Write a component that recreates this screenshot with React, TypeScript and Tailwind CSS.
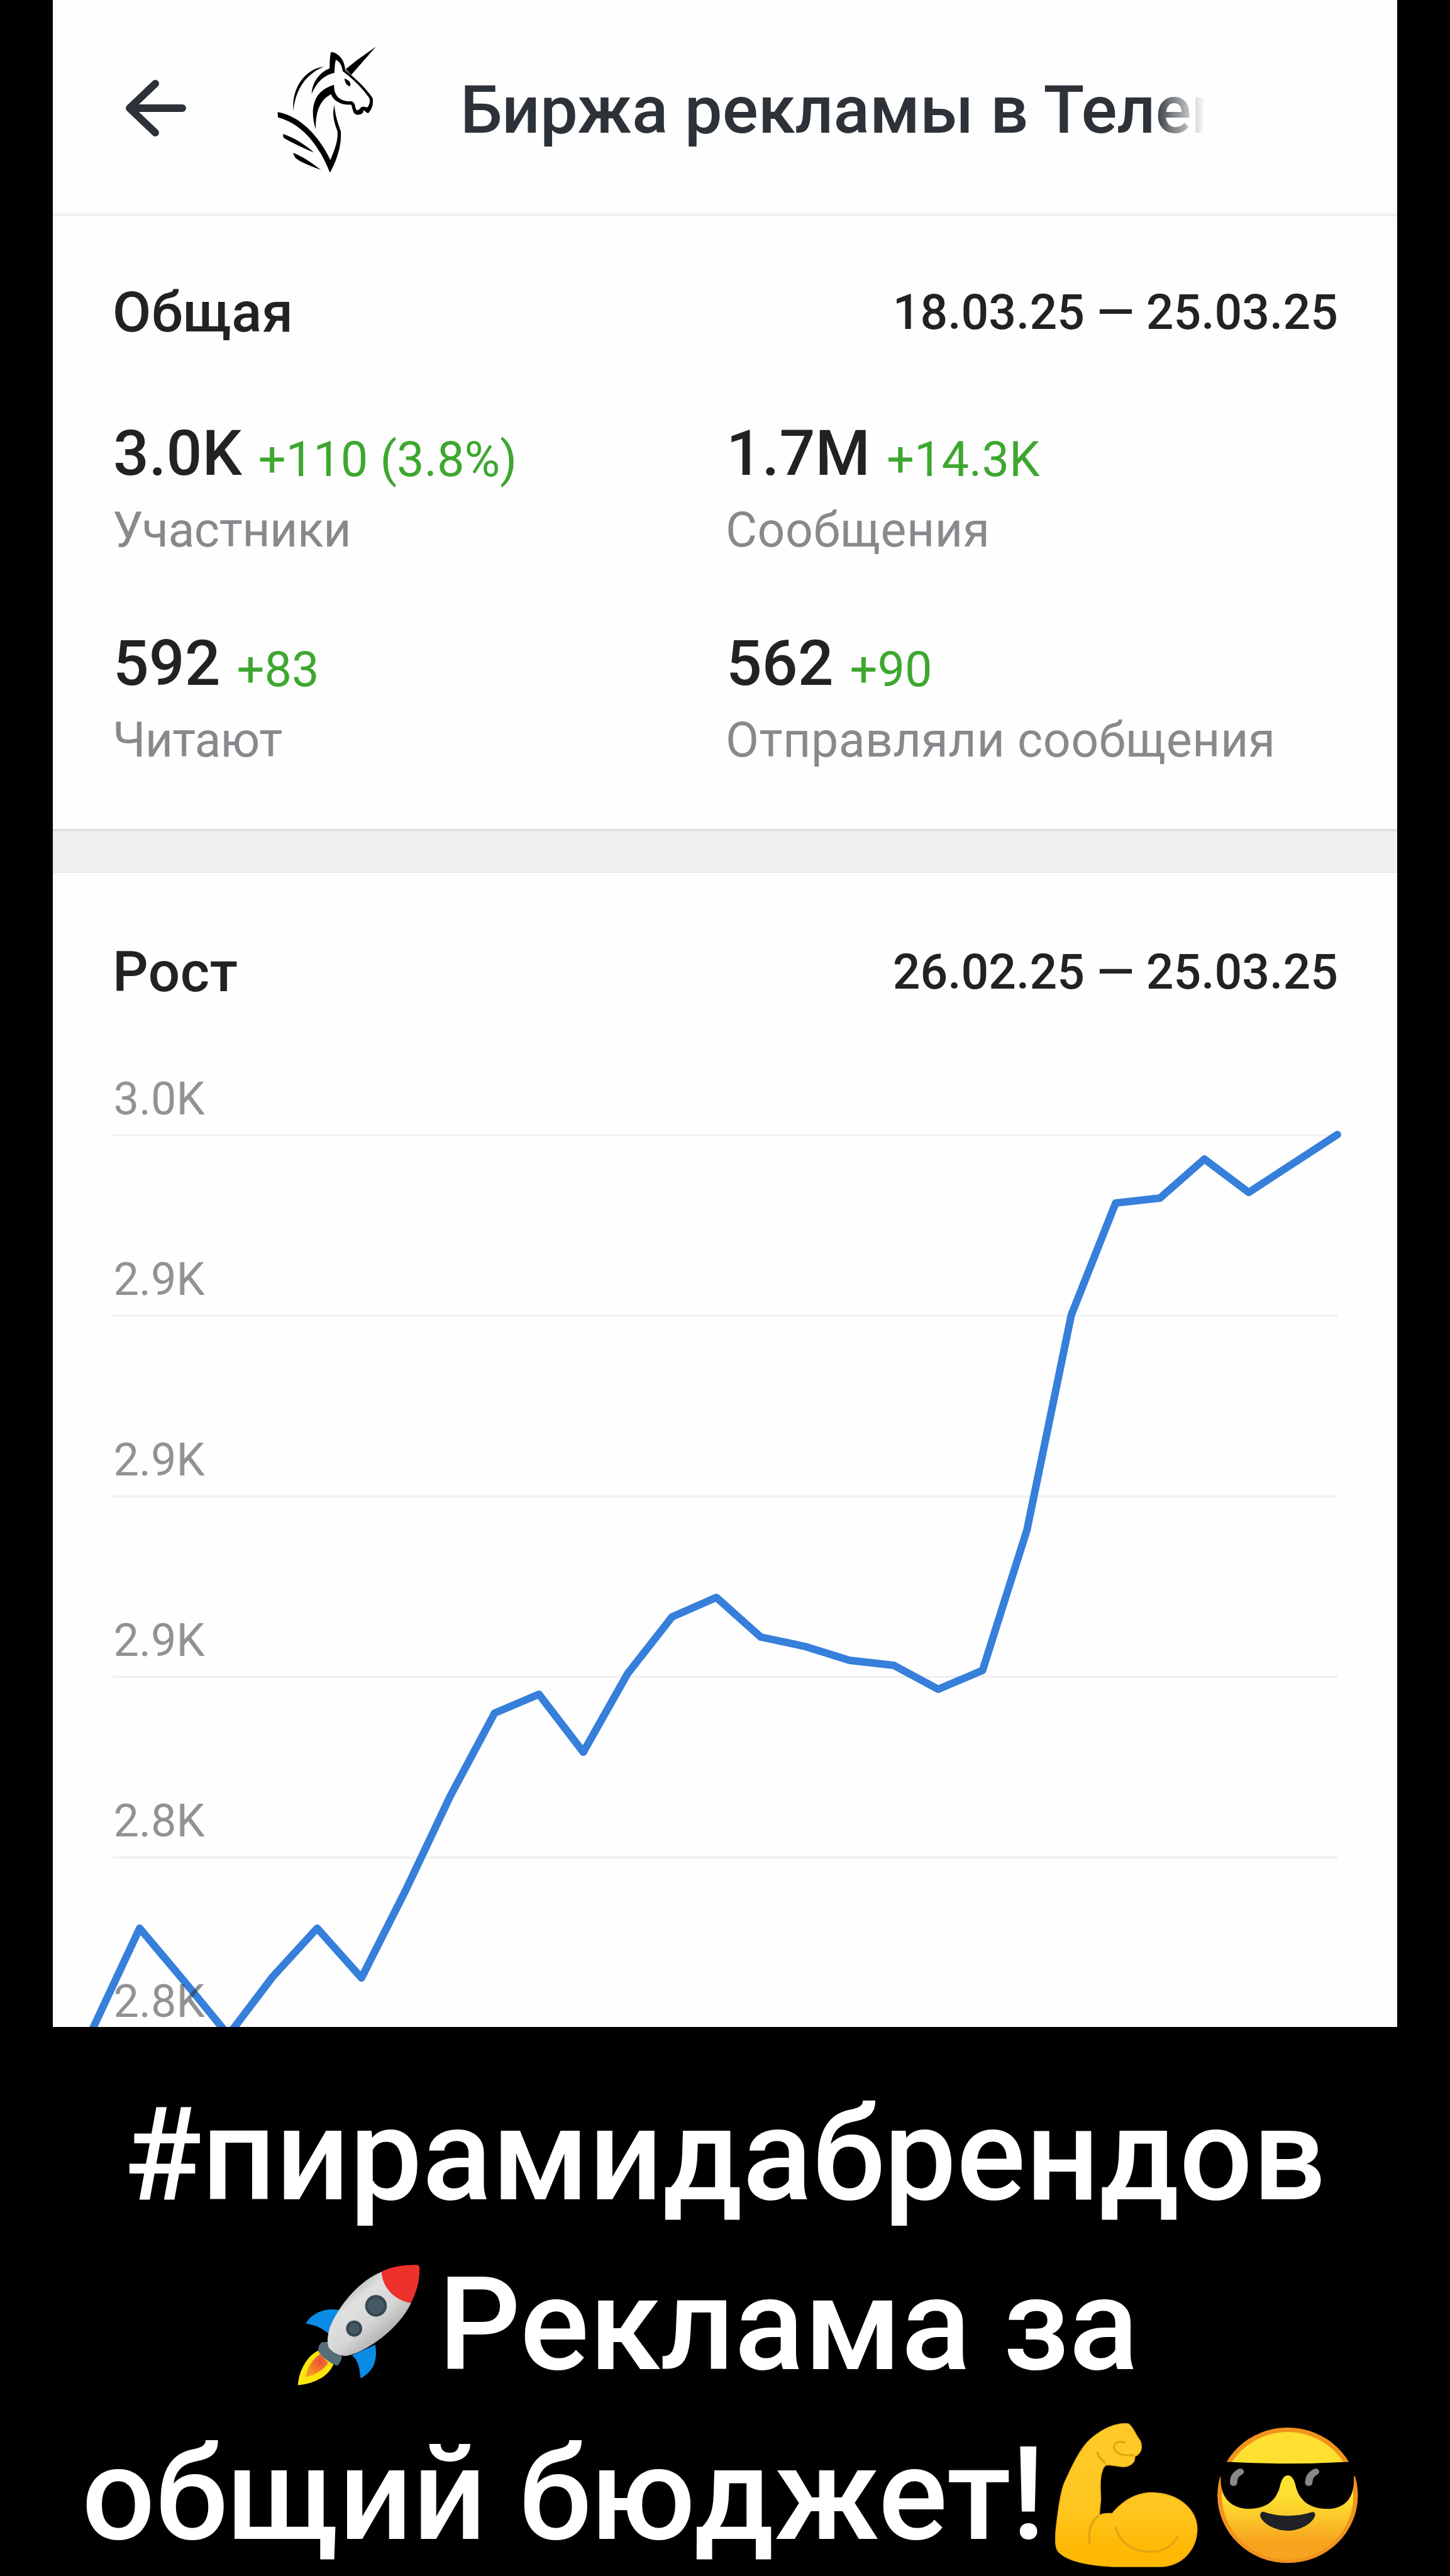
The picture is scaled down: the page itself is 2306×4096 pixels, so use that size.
import clsx from 'clsx';

type Stat = {
  value: string;
  delta: string;
  label: string;
  tracking: string;
};

const stats: Stat[] = [
  {
    value: '3.0K',
    delta: '+110 (3.8%)',
    label: 'Участники',
    tracking: 'tracking-[-0.5px]',
  },
  {
    value: '1.7M',
    delta: '+14.3K',
    label: 'Сообщения',
    tracking: 'tracking-[0.5px]',
  },
  {
    value: '592',
    delta: '+83',
    label: 'Читают',
    tracking: 'tracking-[-1px]',
  },
  {
    value: '562',
    delta: '+90',
    label: 'Отправляли сообщения',
    tracking: 'tracking-[0.5px]',
  },
];

const gridLabels = ['3.0K', '2.9K', '2.9K', '2.9K', '2.8K', '2.8K'];

// y of every day, the last one sits on the right edge of the grid
const growth = [
  1770, 1621, 1470, 1554, 1640, 1547, 1470, 1549, 1409, 1260, 1128, 1098, 1190,
  1065, 975, 944, 1007, 1022, 1044, 1052, 1090, 1060, 837, 495, 317, 309, 247,
  300, 254, 208,
];

const DAY = 70.55;
const GRID_STEP = 287.1;

const BackArrow = (): JSX.Element => (
  <svg className="w-[96px] h-[90px] shrink-0" viewBox="0 0 96 90">
    <path
      d="M90 45H8M47 6L6 45l41 39"
      fill="none"
      stroke="#2c3237"
      strokeWidth="12"
      strokeLinecap="round"
      strokeLinejoin="round"
    />
  </svg>
);

const Unicorn = (): JSX.Element => (
  <svg
    className="w-[214px] h-[232px] shrink-0 -mt-1"
    viewBox="0 0 720 780"
    fill="#000"
  >
    <path d="M632 68L500 218L470 188L530 140Z" />
    <path d="M392 96C430 102 464 135 468 192C520 235 580 290 614 342C620 370 612 405 590 424C578 420 570 408 566 408C566 425 550 434 530 432C506 426 508 395 500 378C450 382 405 360 392 322C340 350 308 400 310 510C290 450 284 370 330 318C355 290 385 278 408 272C406 330 440 364 500 360C526 366 516 394 530 408C545 408 545 392 562 388C580 388 584 400 592 384C600 370 602 355 596 342C560 290 510 240 455 200C448 165 440 150 418 138C410 165 412 185 410 208C350 220 315 260 288 320C290 260 330 205 384 184C386 150 384 120 392 96Z" />
    <path d="M354 174C250 190 180 290 190 412C200 310 245 220 354 174Z" />
    <path d="M464 238C490 248 500 262 494 280C476 276 466 262 464 238Z" />
    <path d="M106 418C240 440 340 570 388 674C420 600 430 560 426 520C408 470 396 430 410 380C412 430 430 480 444 520C450 600 420 680 386 742C330 600 240 480 108 446Z" />
    <path d="M134 535C190 552 250 590 300 634C240 610 180 580 138 556Z" />
    <path d="M188 636C240 655 290 690 338 727C280 705 225 685 200 662Z" />
  </svg>
);

const Header = (): JSX.Element => (
  <header className="flex items-center h-[344px] pt-1 pl-[116px] border-b-[5px] border-[#f0f0f0]">
    <BackArrow />
    <div className="ml-[114px]">
      <Unicorn />
    </div>
    <h1 className="ml-[108px] pt-1.5 w-[1190px] whitespace-nowrap font-medium text-[106.5px] leading-[140px] text-[#2c3237] [mask-image:linear-gradient(to_right,black_92.5%,transparent_99.5%)]">
      Биржа рекламы в Телег
    </h1>
  </header>
);

const SectionTitle = ({
  title,
  period,
}: {
  title: string;
  period: string;
}): JSX.Element => (
  <div className="flex items-center justify-between pl-[95px] pr-[94px] font-medium leading-[100px] text-[#222]">
    <h2 className="text-[89px] tracking-[0.5px]">{title}</h2>
    <span className="text-[77px]">{period}</span>
  </div>
);

const StatItem = ({ value, delta, label, tracking }: Stat): JSX.Element => (
  <div>
    <div className="flex items-end gap-[26px]">
      <span className="font-medium text-[100px] leading-[120px] text-[#222]">
        {value}
      </span>
      <span className="text-[77.5px] leading-[101px] text-[#3da72f]">
        {delta}
      </span>
    </div>
    <div
      className={clsx(
        'mt-[12px] -ml-px text-[77px] leading-[100px] whitespace-nowrap text-[#87898d]',
        tracking,
      )}
    >
      {label}
    </div>
  </div>
);

const GrowthChart = (): JSX.Element => {
  const points = growth
    .map((y, i) => `${2043 - DAY * (growth.length - 1 - i)},${y}`)
    .join(' ');

  return (
    <svg className="block w-[2138px] h-[1627px]" viewBox="0 0 2138 1627">
      {gridLabels.map((_, i) => (
        <line
          key={i}
          x1="95"
          x2="2043"
          y1={209 + GRID_STEP * i}
          y2={209 + GRID_STEP * i}
          stroke="#eff0f0"
          strokeWidth="3.5"
        />
      ))}
      <polyline
        points={points}
        fill="none"
        stroke="#367fdb"
        strokeWidth="12"
        strokeLinejoin="round"
        strokeLinecap="round"
      />
      {gridLabels.map((label, i) => (
        <text
          key={i}
          x="96.5"
          y={175.5 + GRID_STEP * i}
          className="text-[72px] fill-[#252529]/50"
        >
          {label}
        </text>
      ))}
    </svg>
  );
};

const Rocket = (): JSX.Element => (
  <svg className="w-[202px] h-[202px] shrink-0" viewBox="90 110 680 680">
    <defs>
      <linearGradient id="hull" x1="0.25" y1="0.2" x2="0.75" y2="0.8">
        <stop offset="0" stopColor="#b9b9b9" />
        <stop offset="0.22" stopColor="#e0e0e0" />
        <stop offset="0.6" stopColor="#d6d6d6" />
        <stop offset="1" stopColor="#a9a9a9" />
      </linearGradient>
      <radialGradient id="flame" cx="0.65" cy="0.3" r="0.7">
        <stop offset="0" stopColor="#ee4b3a" />
        <stop offset="1" stopColor="#f59a1d" />
      </radialGradient>
    </defs>
    <path
      d="M325 372C250 352 170 385 138 442C190 452 225 465 258 495ZM385 612C425 645 425 690 432 735C500 700 525 640 510 555Z"
      fill="#0a8ce6"
    />
    <path
      d="M206 586C150 610 100 690 96 772C180 765 260 725 286 660Z"
      fill="#fde60b"
    />
    <path
      d="M216 604C170 635 145 680 138 728C190 718 235 690 258 652Z"
      fill="url(#flame)"
    />
    <path
      d="M225 542Q200 560 206 592Q245 645 305 668Q325 655 332 618L258 540Z"
      fill="#546e7a"
    />
    <path
      d="M545 165C440 205 330 320 270 455C250 510 252 560 265 575C290 605 335 618 360 614C460 595 640 470 704 328Z"
      fill="url(#hull)"
    />
    <path
      d="M544 164C600 136 670 126 735 128Q748 130 747 148C748 215 730 280 700 332C620 320 545 250 544 164Z"
      fill="#ed312d"
    />
    <circle cx="514" cy="347" r="58" fill="#37474f" />
    <circle cx="514" cy="347" r="43" fill="#455a64" />
    <circle cx="397" cy="469" r="43" fill="#37474f" />
    <circle cx="397" cy="469" r="28" fill="#455a64" />
  </svg>
);

const Biceps = (): JSX.Element => (
  <svg
    className="w-[239px] h-[238px] shrink-0"
    viewBox="40 60 700 800"
    preserveAspectRatio="none"
  >
    <defs>
      <linearGradient id="arm" x1="0" y1="0" x2="0" y2="1">
        <stop offset="0.1" stopColor="#ffca28" />
        <stop offset="0.6" stopColor="#ffc61f" />
        <stop offset="0.88" stopColor="#ffb804" />
      </linearGradient>
    </defs>
    <path
      d="M405 80C430 100 440 145 460 170C472 205 466 240 434 256C438 290 410 308 385 310C350 310 320 296 298 302C272 330 272 400 276 480C275 515 270 540 270 568C290 555 310 560 330 558C380 490 440 448 515 448C640 450 725 540 725 645C722 760 650 840 555 844L330 844C200 835 110 810 76 760C62 735 65 700 66 660C75 560 85 460 105 400C140 310 180 210 230 160C285 105 350 72 405 80Z"
      fill="url(#arm)"
      stroke="#e9a81a"
      strokeWidth="4"
    />
    <g fill="none" stroke="#e2a610" strokeWidth="11">
      <path d="M392 182C350 165 325 195 345 225C365 250 400 250 432 248M260 230C264 258 280 276 298 290" />
      <path d="M266 570C225 610 215 660 226 725M344 632C365 720 430 765 510 765C570 762 615 730 636 680" />
    </g>
  </svg>
);

const Sunglasses = (): JSX.Element => (
  <svg
    className="w-[234px] h-[221px] shrink-0"
    viewBox="805 90 685 745"
    preserveAspectRatio="none"
  >
    <defs>
      <linearGradient id="face" x1="0" y1="0" x2="0" y2="1">
        <stop offset="0.5" stopColor="#fde030" />
        <stop offset="0.66" stopColor="#fcc92b" />
        <stop offset="0.85" stopColor="#f7a51f" />
      </linearGradient>
    </defs>
    <ellipse cx="1147" cy="463" rx="327" ry="363" fill="#f2931d" />
    <ellipse cx="1147" cy="466" rx="306" ry="342" fill="url(#face)" />
    <path
      d="M820 284H862Q1147 302 1432 284H1475V350L1455 362C1460 470 1420 535 1330 536C1240 534 1200 480 1186 420C1178 375 1165 356 1147 356C1127 356 1116 385 1110 420C1090 500 1040 535 965 536C880 534 830 470 836 362L820 350Z"
      fill="#000"
    />
    <g fill="none" stroke="#8b8688" strokeWidth="34" strokeLinecap="round">
      <path d="M926 337C902 352 896 368 895 396M1277 337C1253 352 1246 368 1245 396" />
    </g>
    <path
      d="M1034 551C1105 580 1190 580 1262 553Q1276 552 1275 572C1262 615 1205 653 1147 653C1085 652 1030 615 1019 575Q1018 553 1034 551Z"
      fill="#212226"
    />
  </svg>
);

const captionLine = 'flex items-center h-[270px] whitespace-nowrap';

const Caption = (): JSX.Element => (
  <div className="pt-[69px] font-medium text-[205.5px] leading-[270px] text-white">
    <div className={clsx(captionLine, 'justify-center')}>#пирамидабрендов</div>
    <div className={clsx(captionLine, 'pl-[472px] gap-[23px]')}>
      <Rocket />
      <span>Реклама за</span>
    </div>
    <div className={clsx(captionLine, 'pl-[130px]')}>
      <span className="w-[1540px]">общий бюджет!</span>
      <Biceps />
      <div className="ml-[22px]">
        <Sunglasses />
      </div>
    </div>
  </div>
);

export default function App(): JSX.Element {
  return (
    <div className="w-[2306px] h-[4096px] overflow-hidden bg-black font-[Roboto,sans-serif]">
      <main className="ml-[84px] w-[2138px] h-[3223px] overflow-hidden bg-[#fefefe]">
        <Header />
        <section className="pt-[103px] pb-[91px]">
          <SectionTitle title="Общая" period="18.03.25 — 25.03.25" />
          <div className="grid grid-cols-[975px_1fr] gap-y-[102px] mt-[114px] pl-[96px]">
            {stats.map((stat) => (
              <StatItem key={stat.label} {...stat} />
            ))}
          </div>
        </section>
        <div className="h-[70px] bg-[#efefef] border-t-4 border-b-2 border-t-[#e1e1e1] border-b-[#e9e9e9]" />
        <section className="pt-[108px]">
          <SectionTitle title="Рост" period="26.02.25 — 25.03.25" />
          <GrowthChart />
        </section>
      </main>
      <Caption />
    </div>
  );
}
